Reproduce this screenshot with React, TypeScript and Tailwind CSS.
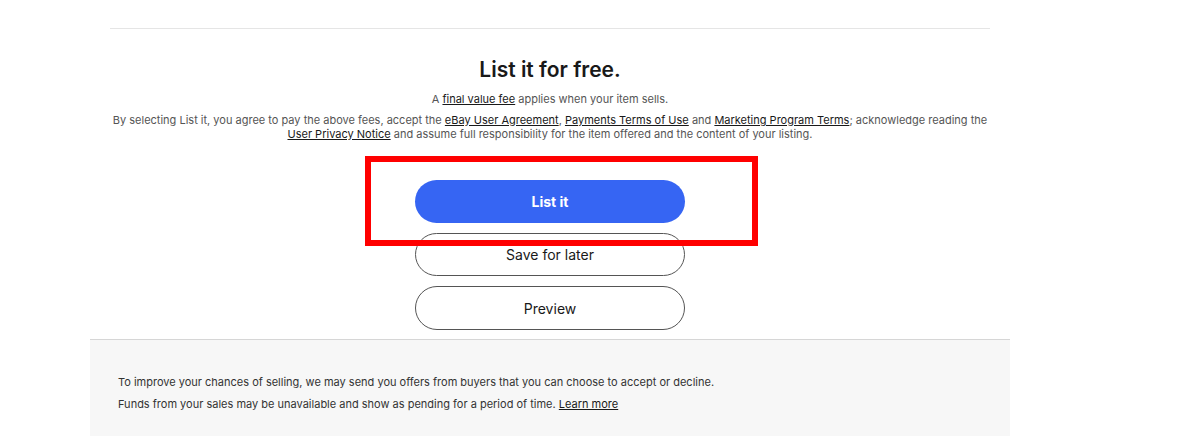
import React from "react";

const font = { fontFamily: "Inter, 'Liberation Sans', Arial, sans-serif" };

export default function App() {
  return (
    <div className="w-[1177px] h-[436px] bg-white overflow-hidden text-[#191919]" style={font}>
      <div className="w-[920px] ml-[90px]">
        {/* top section */}
        <div className="mx-[20px] pt-[28px]">
          <div className="h-px bg-[#e5e5e5]" />
          <div className="flex flex-col items-center pt-[27px]">
            <h2 className="text-[21px] leading-[27px] font-semibold">List it for free.</h2>
            <p className="mt-[9px] text-[11px] leading-[14px] text-[#555]">
              A <a className="underline text-[#191919]">final value fee</a> applies when your item sells.
            </p>
            <p className="mt-[7px] text-[11px] leading-[14px] text-[#555] text-center">
              By selecting List it, you agree to pay the above fees, accept the{" "}
              <a className="underline text-[#191919]">eBay User Agreement</a>,{" "}
              <a className="underline text-[#191919]">Payments Terms of Use</a> and{" "}
              <a className="underline text-[#191919]">Marketing Program Terms</a>; acknowledge reading the
              <br />
              <a className="underline text-[#191919]">User Privacy Notice</a> and assume full responsibility for the item offered and the content of your listing.
            </p>

            <div className="relative mt-[39px] flex flex-col items-center gap-[10px]">
              <button className="w-[270px] h-[43px] rounded-full bg-[#3665f3] text-white text-[14px] font-bold">
                List it
              </button>
              <button className="w-[270px] h-[43px] rounded-full border border-[#555] bg-white text-[14px] text-[#191919]">
                Save for later
              </button>
              <button className="w-[270px] h-[44px] rounded-full border border-[#555] bg-white text-[14px] text-[#191919]">
                Preview
              </button>
              {/* highlight box */}
              <div className="absolute left-[-50px] top-[-24px] w-[393px] h-[90px] border-[6px] border-[#ff0000] pointer-events-none" />
            </div>
          </div>
        </div>

        {/* footer */}
        <div className="mt-[9px] h-[97px] bg-[#f7f7f7] border-t border-[#d6d6d6] pl-[28px] pt-[35px] text-[11px] leading-[14px] text-[#333]">
          <p>To improve your chances of selling, we may send you offers from buyers that you can choose to accept or decline.</p>
          <p className="mt-[8px]">
            Funds from your sales may be unavailable and show as pending for a period of time.{" "}
            <a className="underline text-[#191919]">Learn more</a>
          </p>
        </div>
      </div>
    </div>
  );
}
